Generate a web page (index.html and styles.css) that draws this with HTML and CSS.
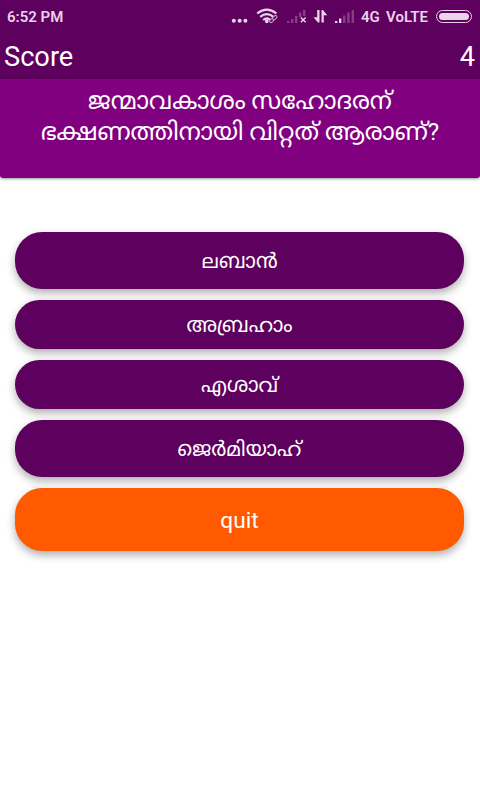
FILE: index.html
```html
<!DOCTYPE html>
<html lang="ml">
<head>
    <meta charset="UTF-8">
    <title>Quiz</title>
    <link rel="stylesheet" href="styles.css">
</head>
<body>
    <div class="status">
        <span class="time">6:52 PM</span>
        <svg class="icons" width="126" height="32" viewBox="0 0 126 32">
            <!-- dots -->
            <circle cx="3.800" cy="20.700" r="2"/>
            <circle cx="9.600" cy="20.700" r="2"/>
            <circle cx="15.400" cy="20.700" r="2"/>
            <!-- wifi -->
            <g class="line">
                <path d="M27.200 13.500q9.600-7.600 19.200 0"/>
                <path d="M30.200 16.800q6.600-5.400 13.200 0"/>
                <path d="M33.200 20q3.600-3 7.200 0"/>
            </g>
            <circle cx="36.800" cy="21.400" r="1.800"/>
            <g class="link">
                <rect x="39.300" y="19" width="5" height="2.800" rx="1.400" transform="rotate(-45 41.800 20.400)"/>
                <rect x="42.300" y="16.200" width="5" height="2.800" rx="1.400" transform="rotate(-45 44.800 17.600)"/>
            </g>
            <!-- signal 1 -->
            <path class="dim" d="M57 23v-2h2.400v2zM61 23v-4h2.400v4zM65 23v-7h2.400v7zM69 17v-4.500h2.400v4.500zM73 16v-6h2.400v6z"/>
            <path class="cross" d="M70.800 17.500l4.800 4.800m0-4.800l-4.800 4.800"/>
            <!-- data arrows -->
            <path d="M87.200 10h2.300v12.500h-1.500l-4.500-5.200h3.700zM91.500 22.500h2.300v-7.300h3.500l-4.400-5.200h-1.400z"/>
            <!-- signal 2 -->
            <path d="M105 23v-2h2.400v2zM109 23v-4.500h2.400v4.500z"/>
            <path class="dim" d="M113 23v-7.500h2.400v7.500zM117.200 23v-10.500h2.400v10.500zM121.600 23v-13h2.400v13z"/>
        </svg>
        <span class="net">4G</span>
        <span class="net volte">VoLTE</span>
        <span class="battery"><i></i></span>
    </div>
    <div class="score">
        <span>Score</span>
        <span>4</span>
    </div>
    <div class="question">ജന്മാവകാശം സഹോദരന്<br>ഭക്ഷണത്തിനായി വിറ്റത് ആരാണ്?</div>
    <div class="answers">
        <button class="btn tall">ലബാൻ</button>
        <button class="btn">അബ്രഹാം</button>
        <button class="btn">എശാവ്</button>
        <button class="btn tall">ജെർമിയാഹ്</button>
        <button class="btn quit">quit</button>
    </div>
</body>
</html>
```
FILE: styles.css
```css
*{
    margin: 0;
    padding: 0;
    box-sizing: border-box;
}
body{
    min-height: 100vh;
    background: #fff;
    color: #fff;
    font-family: Roboto, "Noto Sans Malayalam", "Noto Sans", sans-serif;
}
.status{
    height: 32px;
    display: flex;
    align-items: center;
    padding: 0 8px 0 7px;
    background: #5e005e;
    color: #ebd3eb;
    font-size: 15px;
    font-weight: 600;
    line-height: 32px;
}
.time{
    flex: 1;
    padding-top: 1px;
}
.icons{
    flex: none;
    fill: #ebd3eb;
    margin-right: 5px;
}
.line{
    fill: none;
    stroke: #ebd3eb;
    stroke-width: 2.2;
}
.link{
    fill: #5e005e;
    stroke: #c79fc7;
    stroke-width: 1.1;
}
.dim{
    fill: #863f86;
}
.cross{
    fill: none;
    stroke: #ebd3eb;
    stroke-width: 1.4;
}
.net{
    width: 19px;
    padding-top: 1px;
}
.volte{
    width: 42px;
    margin: 0 8px 0 6px;
}
.battery{
    width: 36px;
    height: 13px;
    padding: 2px;
    border: 1px solid #ebd3eb;
    border-radius: 7px;
}
.battery i{
    display: block;
    height: 7px;
    border-radius: 4px;
    background: #ebd3eb;
}
.score{
    height: 47px;
    display: flex;
    justify-content: space-between;
    padding: 3px 5px 0 4px;
    background: #5e005e;
    font-size: 27.2px;
    line-height: 44px;
}
.question{
    height: 99px;
    padding-top: 7px;
    background: #800080;
    border-radius: 0 0 3px 3px;
    box-shadow: 0 1px 3px rgba(0,0,0,.4);
    font-size: 24.2px;
    line-height: 31px;
    text-align: center;
    white-space: nowrap;
}
.answers{
    display: flex;
    flex-direction: column;
    gap: 11px;
    padding: 54px 16px 0 15px;
}
.btn{
    height: 49px;
    padding-top: 1px;
    border: none;
    border-radius: 27px;
    background: #5e005e;
    box-shadow: 0 4px 9px rgba(0,0,0,.32);
    color: #fff;
    font-family: inherit;
    font-size: 20.4px;
    line-height: 30px;
}
.tall{
    height: 57px;
}
.quit{
    height: 63px;
    padding-top: 2px;
    background: #ff5a00;
    font-size: 22.7px;
}
```
